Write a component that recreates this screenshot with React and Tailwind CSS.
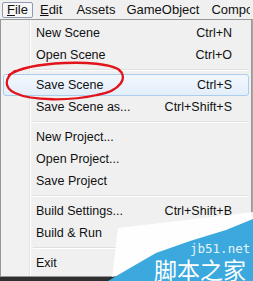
export default function App() {
  const font = "font-['Liberation_Sans',Arial,sans-serif]";
  const Row = ({ label, shortcut, hl }) => (
    <div
      className={`h-[22px] flex items-center justify-between pl-[32px] pr-[16px] rounded-[3px] border ${
        hl
          ? "border-[#aacdee] bg-[linear-gradient(to_bottom,#f2f7fd,#e3eefa)]"
          : "border-transparent"
      }`}
    >
      <span>{label}</span>
      {shortcut && <span>{shortcut}</span>}
    </div>
  );
  const Sep = () => (
    <div className="h-[8px] flex flex-col justify-center pl-[30px]">
      <div className="h-px bg-[#e0e0e0]" />
      <div className="h-px bg-white" />
    </div>
  );
  return (
    <div className={`relative w-[253px] h-[281px] overflow-hidden bg-[#2f2f2f] ${font} text-[#111]`}>
      <div className="h-[19px] bg-[#f0f0f0] flex items-center text-[13px] overflow-hidden">
        <div className="ml-[2px] h-[16px] px-[4px] flex items-center border border-[#8e9bb3] rounded-[2px] bg-[#f7f7f7]">
          <span>
            <span className="underline">F</span>ile
          </span>
        </div>
        <div className="ml-[7px]">
          <span className="underline">E</span>dit
        </div>
        <div className="ml-[14px]">Assets</div>
        <div className="ml-[11px]">GameObject</div>
        <div className="ml-[12px] w-[39px] overflow-hidden whitespace-nowrap">Compo</div>
      </div>
      <div className="flex">
        <div className="w-[252px] border border-[#979797] p-[2px] text-[12.5px] bg-[linear-gradient(to_right,#f1f1f1_28px,#e2e3e3_28px,#e2e3e3_29px,#ffffff_29px,#ffffff_30px,#f0f0f0_30px)]">
          <Row label="New Scene" shortcut="Ctrl+N" />
          <Row label="Open Scene" shortcut="Ctrl+O" />
          <Sep />
          <Row label="Save Scene" shortcut="Ctrl+S" hl />
          <Row label="Save Scene as..." shortcut="Ctrl+Shift+S" />
          <Sep />
          <Row label="New Project..." />
          <Row label="Open Project..." />
          <Row label="Save Project" />
          <Sep />
          <Row label="Build Settings..." shortcut="Ctrl+Shift+B" />
          <Row label="Build & Run" />
          <Sep />
          <Row label="Exit" />
        </div>
        <div className="w-px bg-[#a8a8a8]" />
      </div>

      <svg className="absolute inset-0 pointer-events-none" width="253" height="281">
        <path
          d="M 9 75 C 30 61, 100 59, 118 69 C 129 77, 121 91, 97 95 C 70 101, 32 101, 15 93 C 4 88, 4 78, 15 71"
          fill="none"
          stroke="#e3131c"
          strokeWidth="2.3"
          strokeLinecap="round"
        />
        <polygon points="118,228 253,212 253,220 112,277" fill="#ffffff" opacity="0.9" />
        <polygon points="253,219 226,230 190,241 156,253 130,268 108,281 253,281" fill="#3ba8de" />
      </svg>
      <div className="absolute left-[190px] top-[242px] text-[12.5px] leading-[14px] text-[#e6f4fb] font-['DejaVu_Sans_Mono',monospace]">
        jb51.net
      </div>
      <div className="absolute left-[154px] top-[257px] text-[23px] leading-[24px] text-white font-['Noto_Sans_CJK_SC',sans-serif]">
        脚本之家
      </div>
    </div>
  );
}
